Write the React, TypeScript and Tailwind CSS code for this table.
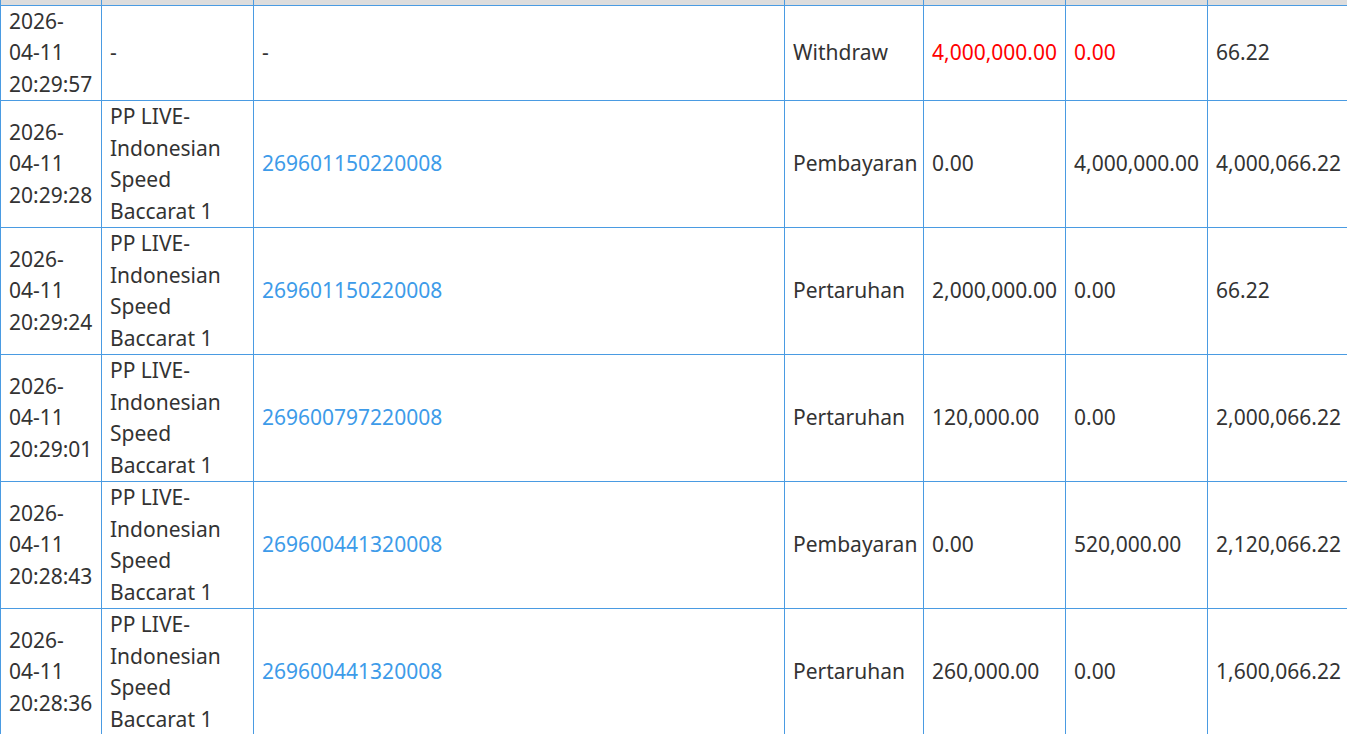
const rows = [
  { date: ["2026-", "04-11", "20:29:57"], game: "-", ref: "-", type: "Withdraw", debit: "4,000,000.00", credit: "0.00", balance: "66.22", red: true },
  { date: ["2026-", "04-11", "20:29:28"], game: "PP LIVE-Indonesian Speed Baccarat 1", ref: "269601150220008", type: "Pembayaran", debit: "0.00", credit: "4,000,000.00", balance: "4,000,066.22" },
  { date: ["2026-", "04-11", "20:29:24"], game: "PP LIVE-Indonesian Speed Baccarat 1", ref: "269601150220008", type: "Pertaruhan", debit: "2,000,000.00", credit: "0.00", balance: "66.22" },
  { date: ["2026-", "04-11", "20:29:01"], game: "PP LIVE-Indonesian Speed Baccarat 1", ref: "269600797220008", type: "Pertaruhan", debit: "120,000.00", credit: "0.00", balance: "2,000,066.22" },
  { date: ["2026-", "04-11", "20:28:43"], game: "PP LIVE-Indonesian Speed Baccarat 1", ref: "269600441320008", type: "Pembayaran", debit: "0.00", credit: "520,000.00", balance: "2,120,066.22" },
  { date: ["2026-", "04-11", "20:28:36"], game: "PP LIVE-Indonesian Speed Baccarat 1", ref: "269600441320008", type: "Pertaruhan", debit: "260,000.00", credit: "0.00", balance: "1,600,066.22" },
];

const td = "border border-[#4a9be2] px-2 py-0 align-middle";

export default function App() {
  return (
    <div className="w-[1347px] h-[734px] overflow-hidden bg-white font-['Noto_Sans',sans-serif] text-[21px] leading-[31.5px] text-[#333]">
      <table className="table-fixed border-collapse w-[1500px]">
        <colgroup>
          <col className="w-[101px]" />
          <col className="w-[152px]" />
          <col className="w-[531px]" />
          <col className="w-[139px]" />
          <col className="w-[142px]" />
          <col className="w-[142px]" />
          <col className="w-[293px]" />
        </colgroup>
        <thead>
          <tr className="h-[5px]">
            {[0, 1, 2, 3, 4, 5, 6].map((i) => (
              <th key={i} className="border border-t-0 border-[#4a9be2] bg-[#dddddd] p-0 h-[5px] leading-none"></th>
            ))}
          </tr>
        </thead>
        <tbody>
          {rows.map((r, i) => (
            <tr key={i}>
              <td className={td}>
                {r.date.map((d) => (
                  <div key={d}>{d}</div>
                ))}
              </td>
              <td className={td}>{r.game}</td>
              <td className={`${td} ${r.ref !== "-" ? "text-[#3d9be9]" : ""}`}>{r.ref}</td>
              <td className={`${td} whitespace-nowrap`}>{r.type}</td>
              <td className={`${td} whitespace-nowrap ${r.red ? "text-[#ff0000]" : ""}`}>{r.debit}</td>
              <td className={`${td} whitespace-nowrap ${r.red ? "text-[#ff0000]" : ""}`}>{r.credit}</td>
              <td className={`${td} whitespace-nowrap`}>{r.balance}</td>
            </tr>
          ))}
        </tbody>
      </table>
    </div>
  );
}
